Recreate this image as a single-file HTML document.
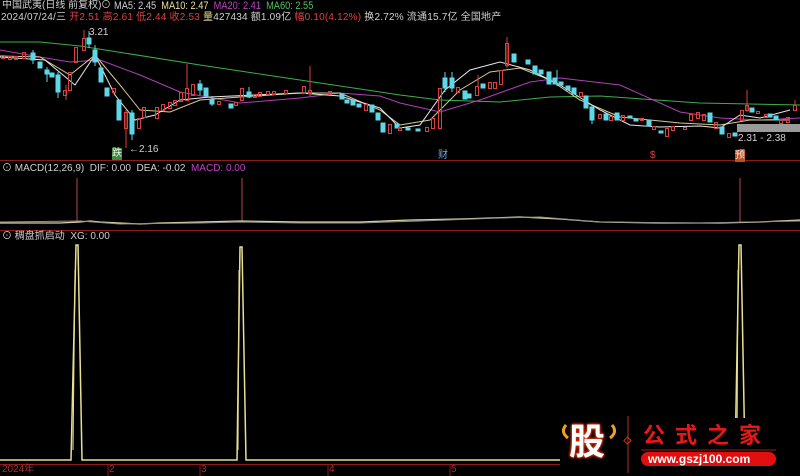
<!DOCTYPE html>
<html><head><meta charset="utf-8"><style>
body{margin:0;background:#000;width:800px;height:476px;overflow:hidden;font-family:"Liberation Sans","Noto Sans CJK SC",sans-serif;}
.t{position:absolute;font-size:10px;white-space:nowrap;line-height:12px;}
.n{transform:scaleX(0.84);transform-origin:0 0;font-size:11px;}
</style></head><body>
<div style="position:relative;width:800px;height:476px;">
<svg width="800" height="476" style="position:absolute;left:0;top:0" xmlns="http://www.w3.org/2000/svg">
<line x1="0" y1="160.5" x2="800" y2="160.5" stroke="#8a1c1c"/>
<line x1="0" y1="230.5" x2="800" y2="230.5" stroke="#8a1c1c"/>
<line x1="0" y1="464.5" x2="800" y2="464.5" stroke="#8a1c1c"/>
<g stroke="#8a1c1c"><line x1="108" y1="464" x2="108" y2="476"/><line x1="200" y1="464" x2="200" y2="476"/><line x1="328" y1="464" x2="328" y2="476"/><line x1="450" y1="464" x2="450" y2="476"/></g>
<polyline fill="none" stroke="#3cb04a" points="0,42 40,42 80,46 200,65 300,80 400,95 440,100 500,102 550,97 600,96 700,103 800,105"/>
<polyline fill="none" stroke="#b040b8" points="0,50 40,57 70,62 100,60 140,75 180,92 240,103 300,98 340,93 380,96 400,103 440,112 480,100 530,82 560,78 620,85 680,112 720,118 760,120 800,118"/>
<polyline fill="none" stroke="#d8c890" points="0,56 40,57 70,75 95,55 120,85 140,110 170,112 200,100 240,97 300,93 340,93 380,110 400,125 430,120 460,90 490,72 520,68 550,80 580,100 620,117 680,123 720,125 750,120 790,120"/>
<polyline fill="none" stroke="#e8e8e8" points="0,57 45,60 75,85 95,55 115,95 135,120 155,115 180,100 210,97 300,93 340,96 380,108 400,128 420,125 445,90 470,70 500,62 530,70 560,85 600,110 630,125 660,127 700,126 720,128 740,115 760,118 790,110"/>
<rect x="737" y="124" width="63" height="8" fill="#9a9a9a"/>
<g fill="#5fd7e6" stroke="#5fd7e6">
<rect x="31" y="53" width="4" height="7"/><rect x="38" y="62" width="4" height="6"/><rect x="45" y="70" width="4" height="4"/><rect x="50" y="73" width="4" height="4"/><rect x="56" y="75" width="4" height="17"/><rect x="87" y="38" width="4" height="6"/><rect x="93" y="50" width="4" height="12"/><rect x="99" y="68" width="4" height="14"/><rect x="105" y="88" width="4" height="8"/><rect x="117" y="100" width="4" height="20"/><rect x="130" y="113" width="4" height="21"/><rect x="198" y="84" width="4" height="6"/><rect x="204" y="88" width="4" height="8"/><rect x="210" y="100" width="4" height="4"/><rect x="229" y="104" width="4" height="4"/><rect x="247" y="92" width="4" height="5"/><rect x="340" y="94" width="4" height="5"/><rect x="345" y="100" width="4" height="3"/><rect x="351" y="100" width="4" height="5"/><rect x="357" y="104" width="4" height="3"/><rect x="370" y="105" width="4" height="7"/><rect x="376" y="113" width="4" height="7"/><rect x="381" y="123" width="4" height="9"/><rect x="395" y="124" width="4" height="4"/><rect x="406" y="128" width="4" height="2"/><rect x="416" y="129" width="4" height="2"/><rect x="443" y="78" width="4" height="10"/><rect x="450" y="78" width="4" height="10"/><rect x="463" y="91" width="4" height="8"/><rect x="467" y="94" width="4" height="4"/><rect x="481" y="84" width="4" height="4"/><rect x="512" y="54" width="4" height="8"/><rect x="526" y="60" width="4" height="4"/><rect x="533" y="66" width="4" height="8"/><rect x="539" y="70" width="4" height="4"/><rect x="547" y="72" width="4" height="12"/><rect x="553" y="78" width="4" height="6"/><rect x="559" y="82" width="4" height="3"/><rect x="566" y="86" width="4" height="4"/><rect x="572" y="88" width="4" height="6"/><rect x="584" y="96" width="4" height="12"/><rect x="590" y="107" width="4" height="13"/><rect x="604" y="114" width="4" height="6"/><rect x="615" y="113" width="4" height="7"/><rect x="628" y="116" width="4" height="2"/><rect x="634" y="119" width="4" height="2"/><rect x="647" y="120" width="4" height="6"/><rect x="659" y="131" width="4" height="2"/><rect x="708" y="113" width="4" height="9"/><rect x="720" y="127" width="4" height="7"/><rect x="733" y="133" width="4" height="3"/><rect x="750" y="108" width="4" height="4"/><rect x="768" y="114" width="4" height="3"/><rect x="774" y="116" width="4" height="4"/>
</g>
<g fill="none" stroke="#5fd7e6"><line x1="33" y1="50" x2="33" y2="64"/><line x1="47" y1="67" x2="47" y2="82"/><line x1="58" y1="72" x2="58" y2="98"/><line x1="89" y1="31" x2="89" y2="48"/><line x1="95" y1="45" x2="95" y2="66"/><line x1="132" y1="110" x2="132" y2="140"/><line x1="200" y1="80" x2="200" y2="95"/><line x1="212" y1="96" x2="212" y2="106"/><line x1="249" y1="87" x2="249" y2="98"/><line x1="445" y1="72" x2="445" y2="92"/><line x1="452" y1="72" x2="452" y2="92"/><line x1="557" y1="70" x2="557" y2="86"/><line x1="592" y1="105" x2="592" y2="124"/></g>
<g fill="none" stroke="#d9403e">
<rect x="1.5" y="55.5" width="3" height="3"/><rect x="8.5" y="56.5" width="3" height="3"/><rect x="14.5" y="56.5" width="3" height="3"/><rect x="22.5" y="52.5" width="3" height="6"/><rect x="63.5" y="90.5" width="3" height="5"/><rect x="68.5" y="72.5" width="3" height="18"/><rect x="74.5" y="47.5" width="3" height="15"/><rect x="82.5" y="38.5" width="3" height="12"/><rect x="112.5" y="88.5" width="3" height="4"/><rect x="124.5" y="112.5" width="3" height="16"/><rect x="137.5" y="118.5" width="3" height="10"/><rect x="142.5" y="107.5" width="3" height="10"/><rect x="155.5" y="107.5" width="3" height="11"/><rect x="161.5" y="104.5" width="3" height="6"/><rect x="168.5" y="102.5" width="3" height="6"/><rect x="173.5" y="100.5" width="3" height="5"/><rect x="179.5" y="92.5" width="3" height="9"/><rect x="185.5" y="88.5" width="3" height="12"/><rect x="191.5" y="84.5" width="3" height="11"/><rect x="217.5" y="101.5" width="3" height="3"/><rect x="234.5" y="102.5" width="3" height="3"/><rect x="240.5" y="88.5" width="3" height="12"/><rect x="253.5" y="94.5" width="3" height="3"/><rect x="258.5" y="92.5" width="3" height="4"/><rect x="266.5" y="91.5" width="3" height="3"/><rect x="272.5" y="91.5" width="3" height="3"/><rect x="284.5" y="90.5" width="3" height="3"/><rect x="302.5" y="86.5" width="3" height="7"/><rect x="308.5" y="90.5" width="3" height="3"/><rect x="328.5" y="91.5" width="3" height="3"/><rect x="364.5" y="104.5" width="3" height="6"/><rect x="388.5" y="124.5" width="3" height="9"/><rect x="398.5" y="127.5" width="3" height="3"/><rect x="425.5" y="127.5" width="3" height="4"/><rect x="431.5" y="118.5" width="3" height="10"/><rect x="438.5" y="88.5" width="3" height="40"/><rect x="456.5" y="87.5" width="3" height="5"/><rect x="475.5" y="86.5" width="3" height="9"/><rect x="488.5" y="82.5" width="3" height="6"/><rect x="493.5" y="82.5" width="3" height="6"/><rect x="499.5" y="70.5" width="3" height="14"/><rect x="505.5" y="43.5" width="3" height="22"/><rect x="579.5" y="92.5" width="3" height="4"/><rect x="598.5" y="114.5" width="3" height="4"/><rect x="609.5" y="116.5" width="3" height="4"/><rect x="621.5" y="115.5" width="3" height="5"/><rect x="640.5" y="118.5" width="3" height="2"/><rect x="652.5" y="126.5" width="3" height="3"/><rect x="665.5" y="128.5" width="3" height="8"/><rect x="671.5" y="126.5" width="3" height="4"/><rect x="683.5" y="127.5" width="3" height="2"/><rect x="689.5" y="114.5" width="3" height="6"/><rect x="696.5" y="112.5" width="3" height="6"/><rect x="702.5" y="114.5" width="3" height="6"/><rect x="714.5" y="122.5" width="3" height="6"/><rect x="727.5" y="133.5" width="3" height="4"/><rect x="740.5" y="110.5" width="3" height="10"/><rect x="745.5" y="105.5" width="3" height="5"/><rect x="756.5" y="111.5" width="3" height="2"/><rect x="764.5" y="114.5" width="3" height="3"/><rect x="779.5" y="119.5" width="3" height="4"/><rect x="786.5" y="117.5" width="3" height="5"/><rect x="793.5" y="105.5" width="3" height="5"/>
<line x1="66" y1="85" x2="66" y2="100"/><line x1="126" y1="110" x2="126" y2="148"/><line x1="187" y1="64" x2="187" y2="88"/><line x1="310" y1="66" x2="310" y2="96"/><line x1="507" y1="37" x2="507" y2="68"/><line x1="478" y1="75" x2="478" y2="86"/><line x1="747" y1="90" x2="747" y2="112"/><line x1="795" y1="100" x2="795" y2="105"/>
</g>
<line x1="84" y1="30" x2="84" y2="38" stroke="#d9403e"/>
<g stroke="#b04848"><line x1="77" y1="178" x2="77" y2="222"/><line x1="242" y1="178" x2="242" y2="222"/><line x1="740" y1="178" x2="740" y2="222"/></g>
<polyline fill="none" stroke="#d8d0a0" stroke-width="1.3" points="0,223 60,223 80,222 90,221 100,222 120,223 140,224 160,223 200,222 240,221 300,222 360,222 410,220 460,219 520,217 560,219 600,222 660,223 720,223 760,222 800,220"/>
<polyline fill="none" stroke="#909090" stroke-width="1" points="0,222 80,221 120,224 200,223 240,222 300,223 360,223 420,221 500,218 540,217 600,222 700,223 800,221"/>
<g fill="none" stroke="#e8e090" stroke-width="1.5">
<polyline points="0,460 71,460 76,245 78,245 82,460 237,460 240,247 242,247 246,460 735,460 739,245 741,245 745,460 800,460"/>
</g>
<g fill="none" stroke="#e8e090" stroke-width="1"><line x1="75" y1="270" x2="73" y2="450"/><line x1="239" y1="270" x2="238" y2="450"/><line x1="738" y1="270" x2="737" y2="450"/></g>
<rect x="560" y="418" width="240" height="58" fill="#000"/>
<line x1="628" y1="416" x2="628" y2="473" stroke="#b03020"/>
<rect x="625" y="438" width="5" height="5" transform="rotate(45 627.5 440.5)" fill="none" stroke="#d03020"/>
<rect x="641" y="452" width="135" height="14" rx="7" fill="#e01010"/>
<line x1="641" y1="450" x2="776" y2="450" stroke="#a02010"/>
<path d="M566 425 Q560 432 568 438" fill="none" stroke="#f0a020" stroke-width="3"/>
<path d="M612 425 Q618 432 610 438" fill="none" stroke="#f0a020" stroke-width="3"/>
</svg>
<div class="t" style="left:2px;top:0;color:#d0d0d0">中国武夷(日线 前复权)</div>
<div class="t" style="left:101px;top:0;color:#d0d0d0">⊙</div>
<div class="t n" style="left:114px;top:0;color:#d0d0d0">MA5: 2.45 &nbsp;<span style="color:#e8e0a0">MA10: 2.47</span> &nbsp;<span style="color:#c040c8">MA20: 2.41</span> &nbsp;<span style="color:#50c060">MA60: 2.55</span></div>
<div class="t" style="left:1px;top:12px;color:#d0d0d0;letter-spacing:0.2px">2024/07/24/三 <span style="color:#e04040">开2.51 高2.61 低2.44 收2.53 </span><span style="color:#e8e090">量</span>427434 额1.09亿 <span style="color:#e04040">幅0.10(4.12%)</span> 换2.72% 流通15.7亿 全国地产</div>
<div class="t" style="left:89px;top:27px;color:#d0d0d0">3.21</div>
<div class="t" style="left:129px;top:144px;color:#d0d0d0">←2.16</div>
<div class="t" style="left:112px;top:148px;background:#3a8a3a;color:#eee;font-size:10px">跌</div>
<div class="t" style="left:438px;top:150px;color:#70a8e0;font-size:10px">财</div>
<div class="t" style="left:650px;top:150px;color:#e04040;font-size:10px">$</div>
<div class="t" style="left:735px;top:150px;background:#c05020;color:#eee;font-size:10px">预</div>
<div class="t" style="left:738px;top:133px;color:#d0d0d0">2.31 - 2.38</div>
<div class="t" style="left:2px;top:163px;color:#d0d0d0;font-size:10px">⊙ MACD(12,26,9) &nbsp;DIF: 0.00 &nbsp;DEA: -0.02 &nbsp;<span style="color:#c040c8">MACD: 0.00</span></div>
<div class="t" style="left:2px;top:231px;color:#d0d0d0;font-size:10px">⊙ 稠盘抓启动 &nbsp;XG: 0.00</div>
<div class="t" style="left:2px;top:464px;color:#a83030;font-size:10px">2024年</div>
<div class="t" style="left:109px;top:464px;color:#a83030;font-size:10px">2</div>
<div class="t" style="left:201px;top:464px;color:#a83030;font-size:10px">3</div>
<div class="t" style="left:329px;top:464px;color:#a83030;font-size:10px">4</div>
<div class="t" style="left:451px;top:464px;color:#a83030;font-size:10px">5</div>
<div class="t" style="left:569px;top:422px;font-size:36px;line-height:40px;font-weight:bold;color:#fff;text-shadow:0 0 3px #e03010,0 0 3px #e03010,0 0 2px #e03010;">股</div>
<div class="t" style="left:643px;top:424px;font-size:22px;line-height:24px;letter-spacing:10px;color:#e81818;font-weight:bold">公式之家</div>
<div class="t" style="left:648px;top:453px;font-size:12px;font-weight:bold;color:#fff">www.gszj100.com</div>
</div>
</body></html>
